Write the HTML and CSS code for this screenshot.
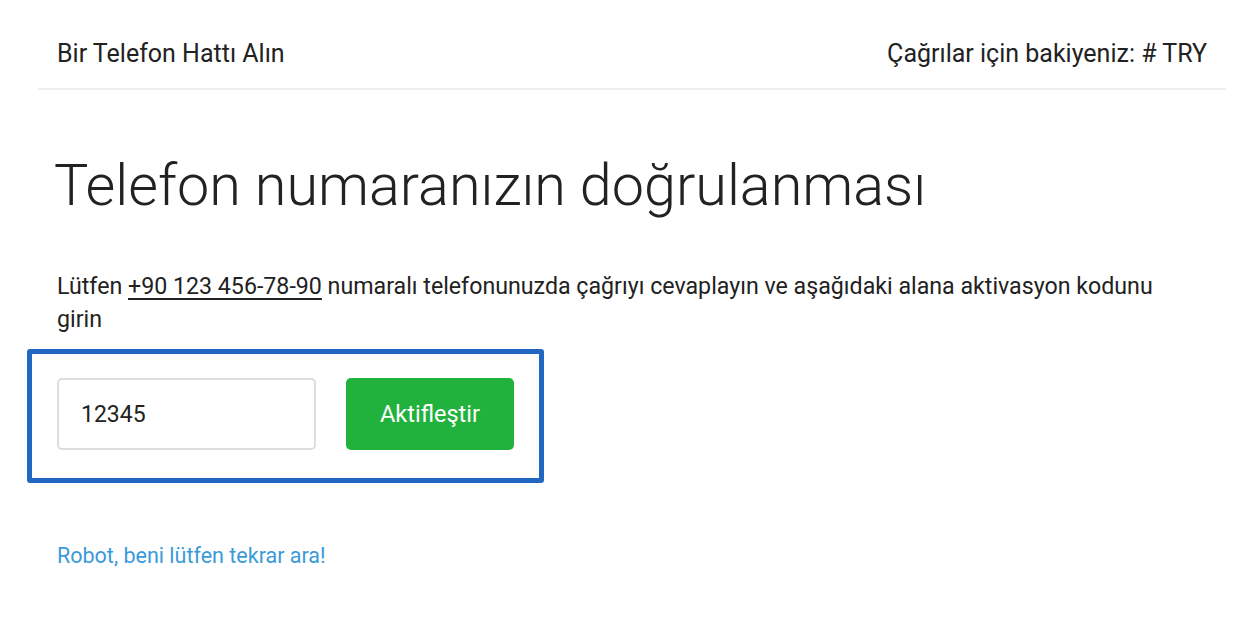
FILE: index.html
```html
<!DOCTYPE html>
<html lang="tr">
<head>
<meta charset="utf-8">
<title>Telefon numaranızın doğrulanması</title>
<link rel="stylesheet" href="styles.css">
</head>
<body>
<header class="topbar">
  <div class="topbar-title">Bir Telefon Hattı Alın</div>
  <div class="topbar-balance">Çağrılar için bakiyeniz: # TRY</div>
</header>
<main class="content">
  <h1 class="heading">Telefon numaranızın doğrulanması</h1>
  <p class="intro">Lütfen <a class="phone" href="#">+90 123 456-78-90</a> numaralı telefonunuzda çağrıyı cevaplayın ve aşağıdaki alana aktivasyon kodunu girin</p>
  <form class="verify">
    <input class="code" type="text" value="12345">
    <button class="activate" type="button">Aktifleştir</button>
  </form>
  <a class="recall" href="#">Robot, beni lütfen tekrar ara!</a>
</main>
</body>
</html>
```
FILE: styles.css
```css
* { box-sizing: border-box; }
html, body { margin: 0; padding: 0; background: #fff; }
body {
  font-family: Roboto, "Noto Sans", sans-serif;
  color: #222;
}
.topbar {
  margin: 0 30px 0 38px;
  height: 90px;
  padding: 19px 19px 0 19px;
  display: flex;
  justify-content: space-between;
  align-items: center;
  border-bottom: 2px solid #eeeeee;
  font-size: 25px;
  color: #222;
}
.content {
  padding: 0 57px;
}
.heading {
  margin: 60px 0 0 -3px;
  font-weight: 300;
  font-size: 57.5px;
  line-height: 72px;
  color: #222;
}
.intro {
  margin: 48px 0 0 0;
  font-size: 23.2px;
  line-height: 33px;
  color: #222;
}
.phone { color: #222; text-decoration: underline; text-underline-offset: 4px; }
.verify {
  margin: 13px 0 0 -30px;
  width: 517px;
  border: 5px solid #2166c0;
  border-radius: 3px;
  padding: 24px 25px 28px 25px;
  display: flex;
  gap: 30px;
}
.code {
  width: 259px;
  height: 72px;
  border: 2px solid #dddddd;
  border-radius: 5px;
  padding: 0 22px;
  font-family: inherit;
  font-size: 23px;
  color: #222;
}
.activate {
  width: 168px;
  height: 72px;
  border: 0;
  border-radius: 5px;
  background: #21b13d;
  color: #fff;
  font-family: inherit;
  font-size: 23.5px;
}
.recall {
  display: inline-block;
  margin-top: 60px;
  font-size: 21.5px;
  color: #3a9ad9;
  text-decoration: none;
}
```
